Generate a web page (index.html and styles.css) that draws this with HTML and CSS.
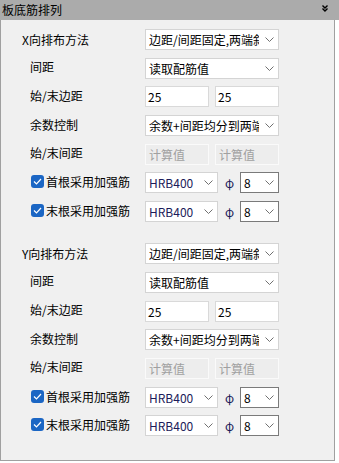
FILE: index.html
```html
<!DOCTYPE html>
<html lang="zh-CN">
<head>
  <meta charset="UTF-8">
  <title>板底筋排列</title>
  <link rel="stylesheet" href="styles.css">
</head>
<body>

  <div class="panel">
    <!-- Header bar -->
    <div class="panel-header">
      <span class="title">板底筋排列</span>
      <svg class="collapse" width="6" height="7" viewBox="0 0 6 7">
        <polyline points="0.5,0.5 3,3 5.5,0.5" fill="none" stroke="#000" stroke-width="1.4"/>
        <polyline points="0.5,3.5 3,6 5.5,3.5" fill="none" stroke="#000" stroke-width="1.4"/>
      </svg>
    </div>

    <div class="panel-body">

      <!-- X direction -->
      <div class="section">
        <div class="row">
          <span class="label main">X向排布方法</span>
          <div class="select"><span class="select-text">边距/间距固定,两端斜放</span><svg class="arrow" width="9" height="5" viewBox="0 0 9 5"><polyline points="0.5,0.5 4.5,4.5 8.5,0.5" fill="none" stroke="#707070"/></svg></div>
        </div>
        <div class="row">
          <span class="label">间距</span>
          <div class="select"><span class="select-text">读取配筋值</span><svg class="arrow" width="9" height="5" viewBox="0 0 9 5"><polyline points="0.5,0.5 4.5,4.5 8.5,0.5" fill="none" stroke="#707070"/></svg></div>
        </div>
        <div class="row">
          <span class="label">始/末边距</span>
          <div class="pair">
            <div class="input">25</div>
            <div class="input">25</div>
          </div>
        </div>
        <div class="row">
          <span class="label">余数控制</span>
          <div class="select"><span class="select-text">余数+间距均分到两端</span><svg class="arrow" width="9" height="5" viewBox="0 0 9 5"><polyline points="0.5,0.5 4.5,4.5 8.5,0.5" fill="none" stroke="#707070"/></svg></div>
        </div>
        <div class="row">
          <span class="label">始/末间距</span>
          <div class="pair">
            <div class="input disabled">计算值</div>
            <div class="input disabled">计算值</div>
          </div>
        </div>
        <div class="row">
          <label class="check"><span class="box"><svg width="9" height="7" viewBox="0 0 9 7"><polyline points="1,3.5 3.5,6 8,1" fill="none" stroke="#fff" stroke-width="1.2"/></svg></span>首根采用加强筋</label>
          <div class="rebar">
            <div class="select grade"><span class="select-text">HRB400</span><svg class="arrow" width="9" height="5" viewBox="0 0 9 5"><polyline points="0.5,0.5 4.5,4.5 8.5,0.5" fill="none" stroke="#707070"/></svg></div>
            <span class="phi">φ</span>
            <div class="select dia"><span class="select-text">8</span><svg class="arrow" width="9" height="5" viewBox="0 0 9 5"><polyline points="0.5,0.5 4.5,4.5 8.5,0.5" fill="none" stroke="#707070"/></svg></div>
          </div>
        </div>
        <div class="row">
          <label class="check"><span class="box"><svg width="9" height="7" viewBox="0 0 9 7"><polyline points="1,3.5 3.5,6 8,1" fill="none" stroke="#fff" stroke-width="1.2"/></svg></span>末根采用加强筋</label>
          <div class="rebar">
            <div class="select grade"><span class="select-text">HRB400</span><svg class="arrow" width="9" height="5" viewBox="0 0 9 5"><polyline points="0.5,0.5 4.5,4.5 8.5,0.5" fill="none" stroke="#707070"/></svg></div>
            <span class="phi">φ</span>
            <div class="select dia"><span class="select-text">8</span><svg class="arrow" width="9" height="5" viewBox="0 0 9 5"><polyline points="0.5,0.5 4.5,4.5 8.5,0.5" fill="none" stroke="#707070"/></svg></div>
          </div>
        </div>
      </div>

      <!-- Y direction -->
      <div class="section">
        <div class="row">
          <span class="label main">Y向排布方法</span>
          <div class="select"><span class="select-text">边距/间距固定,两端斜放</span><svg class="arrow" width="9" height="5" viewBox="0 0 9 5"><polyline points="0.5,0.5 4.5,4.5 8.5,0.5" fill="none" stroke="#707070"/></svg></div>
        </div>
        <div class="row">
          <span class="label">间距</span>
          <div class="select"><span class="select-text">读取配筋值</span><svg class="arrow" width="9" height="5" viewBox="0 0 9 5"><polyline points="0.5,0.5 4.5,4.5 8.5,0.5" fill="none" stroke="#707070"/></svg></div>
        </div>
        <div class="row">
          <span class="label">始/末边距</span>
          <div class="pair">
            <div class="input">25</div>
            <div class="input">25</div>
          </div>
        </div>
        <div class="row">
          <span class="label">余数控制</span>
          <div class="select"><span class="select-text">余数+间距均分到两端</span><svg class="arrow" width="9" height="5" viewBox="0 0 9 5"><polyline points="0.5,0.5 4.5,4.5 8.5,0.5" fill="none" stroke="#707070"/></svg></div>
        </div>
        <div class="row">
          <span class="label">始/末间距</span>
          <div class="pair">
            <div class="input disabled">计算值</div>
            <div class="input disabled">计算值</div>
          </div>
        </div>
        <div class="row">
          <label class="check"><span class="box"><svg width="9" height="7" viewBox="0 0 9 7"><polyline points="1,3.5 3.5,6 8,1" fill="none" stroke="#fff" stroke-width="1.2"/></svg></span>首根采用加强筋</label>
          <div class="rebar">
            <div class="select grade"><span class="select-text">HRB400</span><svg class="arrow" width="9" height="5" viewBox="0 0 9 5"><polyline points="0.5,0.5 4.5,4.5 8.5,0.5" fill="none" stroke="#707070"/></svg></div>
            <span class="phi">φ</span>
            <div class="select dia"><span class="select-text">8</span><svg class="arrow" width="9" height="5" viewBox="0 0 9 5"><polyline points="0.5,0.5 4.5,4.5 8.5,0.5" fill="none" stroke="#707070"/></svg></div>
          </div>
        </div>
        <div class="row">
          <label class="check"><span class="box"><svg width="9" height="7" viewBox="0 0 9 7"><polyline points="1,3.5 3.5,6 8,1" fill="none" stroke="#fff" stroke-width="1.2"/></svg></span>末根采用加强筋</label>
          <div class="rebar">
            <div class="select grade"><span class="select-text">HRB400</span><svg class="arrow" width="9" height="5" viewBox="0 0 9 5"><polyline points="0.5,0.5 4.5,4.5 8.5,0.5" fill="none" stroke="#707070"/></svg></div>
            <span class="phi">φ</span>
            <div class="select dia"><span class="select-text">8</span><svg class="arrow" width="9" height="5" viewBox="0 0 9 5"><polyline points="0.5,0.5 4.5,4.5 8.5,0.5" fill="none" stroke="#707070"/></svg></div>
          </div>
        </div>
      </div>

    </div>
  </div>

</body>
</html>
```

FILE: styles.css
```css
/* Basic Styling */
body {
  margin: 0;
  background-color: #ffffff;
  font-family: "Noto Sans CJK SC", "Noto Sans", sans-serif;
  font-size: 12px;
  color: #000;
}

/* Panel */
.panel {
  width: 339px;
}

.panel-header {
  height: 20px;
  background-color: #ababab;
  display: flex;
  align-items: center;
  justify-content: space-between;
  padding: 0 11px 0 2px;
}

.title {
  font-size: 12px;
  line-height: 20px;
}

.collapse {
  margin-top: -3px;
}

.panel-body {
  width: 333px;
  height: 431px;
  background-color: #f0f0f0;
  border: 1px solid #a0a0a0;
  border-top: none;
  padding-top: 9px;
  display: flex;
  flex-direction: column;
  gap: 21px;
}

/* Rows */
.section {
  display: flex;
  flex-direction: column;
  gap: 7.7px;
}

.row {
  display: grid;
  grid-template-columns: 144px 134px;
  align-items: center;
  height: 21px;
}

.label {
  padding-left: 29px;
  margin-top: -3px;
}

.label.main {
  padding-left: 21px;
  margin-top: 0;
}

/* Checkbox */
.check {
  display: flex;
  align-items: center;
  padding-left: 30px;
  gap: 2px;
  margin-top: -2px;
}

.box {
  width: 13px;
  height: 13px;
  border-radius: 3px;
  background-color: #1b66c4;
  display: flex;
  align-items: center;
  justify-content: center;
}

/* Select boxes */
.select {
  height: 21px;
  box-sizing: border-box;
  background-color: #fff;
  border: 1px solid #d4d4d4;
  display: flex;
  align-items: center;
  padding-left: 3px;
}

.select-text {
  flex: 1;
  overflow: hidden;
  white-space: nowrap;
}

.arrow {
  flex-shrink: 0;
  margin: 0 4px 0 6px;
}

.select.grade {
  width: 73px;
}

.select.grade .select-text,
.phi {
  color: #1c1c5a;
}

.select.dia {
  width: 39px;
  border-color: #7a7a7a;
}

.rebar {
  display: flex;
  align-items: center;
}

.phi {
  width: 22px;
  padding-left: 7px;
  box-sizing: border-box;
}

/* Text inputs */
.pair {
  display: flex;
  gap: 6px;
}

.input {
  width: 64px;
  height: 21px;
  box-sizing: border-box;
  background-color: #fff;
  border: 1px solid #d9d9d9;
  padding-left: 2px;
  line-height: 19px;
}

.input.disabled {
  background-color: #ededed;
  border-color: #fafafa;
  color: #a0a0a0;
  padding-left: 3px;
}
```
